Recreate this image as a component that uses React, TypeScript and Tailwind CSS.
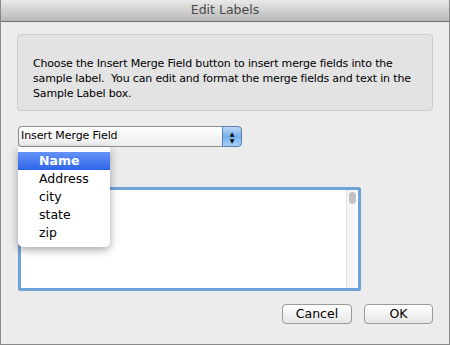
import React from 'react';

const items = ['Name', 'Address', 'city', 'state', 'zip'];

function PopupButton() {
  return (
    <div className="relative ml-[1px] mt-[15px] flex h-[21px] w-[224px]">
      <div className="flex flex-1 items-center rounded-l-[4px] border border-r-0 border-[#8e8e8e] bg-gradient-to-b from-white to-[#ececec] pl-[2px] text-[11px] tracking-[-0.1px] text-black">
        Insert Merge Field
      </div>
      <div className="flex w-[20px] flex-col items-center justify-center rounded-r-[4px] border border-[#5a7fb0] bg-gradient-to-b from-[#b9d8f7] via-[#76b0ee] to-[#a7d0f7] text-[6px] leading-[7px] text-black">
        <span>▲</span>
        <span>▼</span>
      </div>
      <div className="absolute left-0 top-[21px] z-10 w-[92px] rounded-b-[5px] bg-white pt-[5px] pb-[5px] text-[12.5px] shadow-[0_3px_8px_rgba(0,0,0,0.35)]">
        {items.map((it, i) => (
          <div
            key={it}
            className={
              i === 0
                ? 'h-[18px] bg-gradient-to-b from-[#6494f7] to-[#2f64ea] pl-[21px] font-bold leading-[18px] text-white'
                : 'h-[18px] pl-[21px] leading-[18px] text-black'
            }
          >
            {it}
          </div>
        ))}
      </div>
    </div>
  );
}

export default function App() {
  return (
    <div className="flex h-[345px] w-[450px] flex-col border-x border-b border-[#8a8a8a] bg-[#ececec] font-['DejaVu_Sans',sans-serif]">
      <div className="flex h-[22px] items-center justify-center border-b border-[#6e6e6e] bg-gradient-to-b from-[#e9e9e9] to-[#b9b9b9] text-[12.5px] text-[#4a4a4a]">
        Edit Labels
      </div>
      <div className="flex flex-col px-[16px]">
        <div className="mt-[12px] h-[77px] rounded-[4px] border border-[#cdcdcd] bg-[#e3e3e3] pl-[15px] pr-[8px] pt-[21px] text-[11px] leading-[15px] tracking-[-0.17px] text-black">
          Choose the Insert Merge Field button to insert merge fields into the sample label.&nbsp; You can edit and format the merge fields and text in the Sample Label box.
        </div>
        <PopupButton />
        <div className="ml-[1px] mt-[17px] h-[16px] text-[11.5px] leading-[16px] text-[#555]">Sample label:</div>
        <div className="ml-[1px] mt-[7px] flex h-[104px] w-[343px] rounded-[2px] border-[3px] border-[#6fa2d8] bg-white">
          <div className="flex-1 pl-[1px] pt-[3px]">
            <div className="h-[11px] w-[1px] bg-[#bbb]" />
          </div>
          <div className="flex w-[12px] justify-center border-l border-[#e2e2e2] bg-gradient-to-r from-[#f4f4f4] to-[#fbfbfb] pt-[2px]">
            <div className="h-[12px] w-[7px] rounded-full bg-[#c2c2c2]" />
          </div>
        </div>
        <div className="mt-[13px] flex justify-end gap-[12px]">
          <button className="h-[20px] w-[70px] rounded-[4px] border border-[#9a9a9a] bg-gradient-to-b from-white to-[#e6e6e6] text-[12.5px] leading-[18px] text-black">
            Cancel
          </button>
          <button className="h-[20px] w-[69px] rounded-[4px] border border-[#9a9a9a] bg-gradient-to-b from-white to-[#e6e6e6] text-[12.5px] leading-[18px] text-black">
            OK
          </button>
        </div>
      </div>
    </div>
  );
}
